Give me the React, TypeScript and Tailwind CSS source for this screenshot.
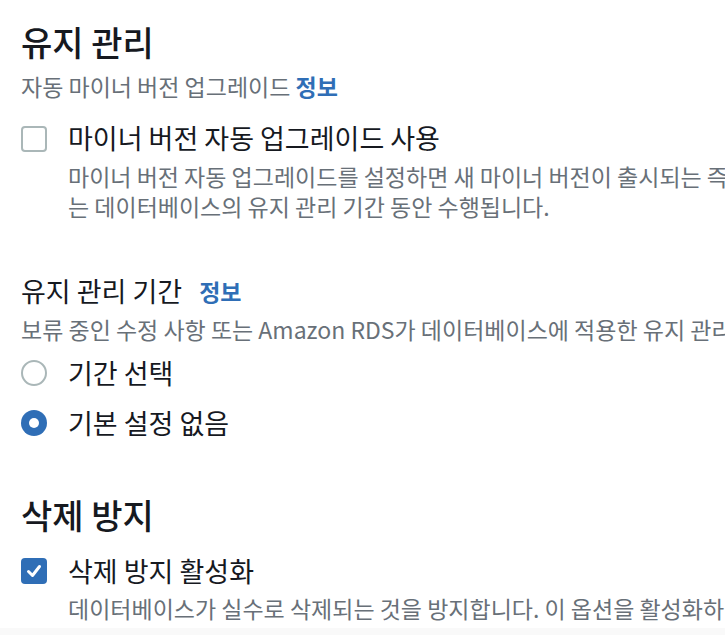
import React from 'react';

const font = { fontFamily: '"Noto Sans CJK KR", "Noto Sans", sans-serif' };

const Checkbox: React.FC<{ checked?: boolean }> = ({ checked }) =>
  checked ? (
    <div className="w-[26px] h-[26px] rounded-[4px] bg-[#2f6eb6] flex items-center justify-center shrink-0">
      <svg width="18" height="18" viewBox="0 0 18 18" fill="none">
        <path d="M3.5 9.5 L7.5 13.5 L14.5 4.5" stroke="white" strokeWidth="3" strokeLinecap="round" strokeLinejoin="round" />
      </svg>
    </div>
  ) : (
    <div className="w-[26px] h-[26px] rounded-[4px] border-2 border-[#aab7b8] bg-white shrink-0" />
  );

const Radio: React.FC<{ checked?: boolean }> = ({ checked }) =>
  checked ? (
    <div className="w-[26px] h-[26px] rounded-full bg-[#2f6eb6] flex items-center justify-center shrink-0">
      <div className="w-[10px] h-[10px] rounded-full bg-white" />
    </div>
  ) : (
    <div className="w-[26px] h-[26px] rounded-full border-2 border-[#aab7b8] bg-white shrink-0" />
  );

export default function App() {
  return (
    <div className="w-[725px] h-[635px] overflow-hidden bg-white relative" style={font}>
      <div className="w-[1200px] pl-[21px] pt-[22px]">
        {/* 유지 관리 */}
        <h2 className="text-[34px] leading-[40px] text-[#16191f] font-medium">유지 관리</h2>
        <p className="mt-[10px] text-[23px] leading-[28px] text-[#687078]">
          자동 마이너 버전 업그레이드 <span className="text-[#2f6eb6] font-bold">정보</span>
        </p>

        <div className="mt-[22px] flex gap-[21px]">
          <div className="pt-[4px]">
            <Checkbox />
          </div>
          <div>
            <p className="text-[27px] leading-[32px] text-[#16191f]">마이너 버전 자동 업그레이드 사용</p>
            <p className="mt-[7px] text-[23px] leading-[30px] text-[#687078] whitespace-nowrap">
              마이너 버전 자동 업그레이드를 설정하면 새 마이너 버전이 출시되는 즉시 자동으로 업그레이드됩니다. 자동 업그레이드
              <br />
              는 데이터베이스의 유지 관리 기간 동안 수행됩니다.
            </p>
          </div>
        </div>

        {/* 유지 관리 기간 */}
        <div className="mt-[54px] flex items-center gap-[17px]">
          <span className="text-[27px] leading-[32px] text-[#16191f]">유지 관리 기간</span>
          <span className="text-[23px] leading-[32px] text-[#2f6eb6] font-bold">정보</span>
        </div>
        <p className="mt-[8px] text-[23px] leading-[28px] text-[#687078] whitespace-nowrap">
          보류 중인 수정 사항 또는 Amazon RDS가 데이터베이스에 적용한 유지 관리 항목을 적용할 기간입니다.
        </p>

        <div className="mt-[14px] flex flex-col gap-[18px]">
          <label className="flex items-center gap-[21px]">
            <Radio />
            <span className="text-[27px] leading-[32px] text-[#16191f]">기간 선택</span>
          </label>
          <label className="flex items-center gap-[21px]">
            <Radio checked />
            <span className="text-[27px] leading-[32px] text-[#16191f]">기본 설정 없음</span>
          </label>
        </div>

        {/* 삭제 방지 */}
        <h2 className="mt-[56px] text-[34px] leading-[40px] text-[#16191f] font-medium">삭제 방지</h2>
        <div className="mt-[20px] flex gap-[21px]">
          <div className="pt-[3px]">
            <Checkbox checked />
          </div>
          <div>
            <p className="text-[27px] leading-[32px] text-[#16191f]">삭제 방지 활성화</p>
            <p className="mt-[7px] text-[23px] leading-[28px] text-[#687078] whitespace-nowrap">
              데이터베이스가 실수로 삭제되는 것을 방지합니다. 이 옵션을 활성화하면 데이터베이스를 삭제할 수 없습니다.
            </p>
          </div>
        </div>
      </div>
      <div className="absolute left-0 right-0 bottom-0 h-[7px] bg-[#f9f9f9]" />
    </div>
  );
}
